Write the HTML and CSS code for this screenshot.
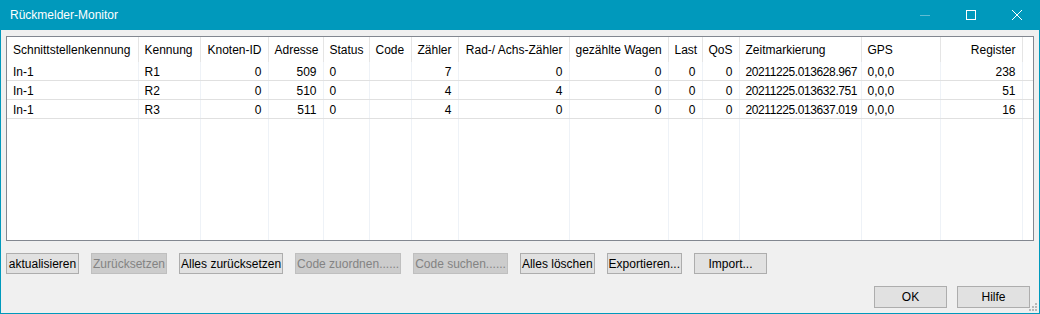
FILE: index.html
```html
<!DOCTYPE html>
<html lang="de">
<head>
    <meta charset="UTF-8">
    <title>Rückmelder-Monitor</title>
    <link rel="stylesheet" href="styles.css">
</head>
<body>

    <div class="window">
        <div class="titlebar">
            <span class="title">Rückmelder-Monitor</span>
            <div class="caption-buttons">
                <span class="cap-btn">
                    <svg width="10" height="10" viewBox="0 0 10 10"><line x1="0" y1="5.5" x2="10" y2="5.5" stroke="#5fbcd3" stroke-width="1"/></svg>
                </span>
                <span class="cap-btn">
                    <svg width="10" height="10" viewBox="0 0 10 10"><rect x="0.5" y="0.5" width="9" height="9" fill="none" stroke="#fff" stroke-width="1"/></svg>
                </span>
                <span class="cap-btn">
                    <svg width="10" height="10" viewBox="0 0 10 10"><path d="M0 0 L10 10 M10 0 L0 10" stroke="#fff" stroke-width="1"/></svg>
                </span>
            </div>
        </div>

        <div class="content">
            <div class="grid-box">
                <table class="grid">
                    <colgroup>
                        <col style="width:131px">
                        <col style="width:62px">
                        <col style="width:68px">
                        <col style="width:55px">
                        <col style="width:46px">
                        <col style="width:42px">
                        <col style="width:47px">
                        <col style="width:111px">
                        <col style="width:99px">
                        <col style="width:34px">
                        <col style="width:37px">
                        <col style="width:122px">
                        <col style="width:79px">
                        <col style="width:82px">
                        <col>
                    </colgroup>
                    <thead>
                        <tr>
                            <th>Schnittstellenkennung</th>
                            <th>Kennung</th>
                            <th class="num">Knoten-ID</th>
                            <th class="num">Adresse</th>
                            <th>Status</th>
                            <th>Code</th>
                            <th class="num">Zähler</th>
                            <th class="num">Rad-/ Achs-Zähler</th>
                            <th class="num">gezählte Wagen</th>
                            <th class="num">Last</th>
                            <th class="num">QoS</th>
                            <th>Zeitmarkierung</th>
                            <th>GPS</th>
                            <th class="num">Register</th>
                            <th></th>
                        </tr>
                    </thead>
                    <tbody>
                        <tr>
                            <td>In-1</td><td>R1</td><td class="num">0</td><td class="num">509</td><td>0</td><td></td>
                            <td class="num">7</td><td class="num">0</td><td class="num">0</td><td class="num">0</td><td class="num">0</td>
                            <td class="stamp">20211225.013628.967</td><td>0,0,0</td><td class="num">238</td><td></td>
                        </tr>
                        <tr>
                            <td>In-1</td><td>R2</td><td class="num">0</td><td class="num">510</td><td>0</td><td></td>
                            <td class="num">4</td><td class="num">4</td><td class="num">0</td><td class="num">0</td><td class="num">0</td>
                            <td class="stamp">20211225.013632.751</td><td>0,0,0</td><td class="num">51</td><td></td>
                        </tr>
                        <tr>
                            <td>In-1</td><td>R3</td><td class="num">0</td><td class="num">511</td><td>0</td><td></td>
                            <td class="num">4</td><td class="num">0</td><td class="num">0</td><td class="num">0</td><td class="num">0</td>
                            <td class="stamp">20211225.013637.019</td><td>0,0,0</td><td class="num">16</td><td></td>
                        </tr>
                        <tr class="filler">
                            <td></td><td></td><td></td><td></td><td></td><td></td><td></td><td></td>
                            <td></td><td></td><td></td><td></td><td></td><td></td><td></td>
                        </tr>
                    </tbody>
                </table>
            </div>

            <div class="toolbar">
                <button class="btn">aktualisieren</button>
                <button class="btn" disabled>Zurücksetzen</button>
                <button class="btn">Alles zurücksetzen</button>
                <button class="btn" disabled>Code zuordnen......</button>
                <button class="btn" disabled>Code suchen......</button>
                <button class="btn">Alles löschen</button>
                <button class="btn">Exportieren...</button>
                <button class="btn">Import...</button>
            </div>

            <div class="footer">
                <button class="btn wide">OK</button>
                <button class="btn wide">Hilfe</button>
            </div>
        </div>

        <div class="grip">
            <svg width="8" height="8" viewBox="0 0 8 8" fill="#b8b8b8">
                <rect x="6" y="0" width="2" height="2"/>
                <rect x="3" y="3" width="2" height="2"/><rect x="6" y="3" width="2" height="2"/>
                <rect x="0" y="6" width="2" height="2"/><rect x="3" y="6" width="2" height="2"/><rect x="6" y="6" width="2" height="2"/>
            </svg>
        </div>
    </div>

</body>
</html>
```

FILE: styles.css
```css
:root {
    --accent: #0099bc;
    --face: #f0f0f0;
    --grid-border: #828790;
    --head-line: #e5e5e5;
    --row-line: #e0e0e0;
    --col-line: #eef2f7;
}

body {
    margin: 0;
    font-family: "Liberation Sans", Arial, sans-serif;
    font-size: 12px;
    color: #000;
    background: var(--face);
}

.window {
    position: relative;
    width: 1040px;
    height: 314px;
    box-sizing: border-box;
    border: 1px solid var(--accent);
    border-top: none;
    background: var(--face);
    display: flex;
    flex-direction: column;
}

.titlebar {
    height: 30px;
    margin: 0 -1px;
    background: var(--accent);
    display: flex;
    align-items: center;
    justify-content: space-between;
    padding-left: 10px;
}

.title {
    color: #fff;
    font-size: 12px;
}

.caption-buttons {
    display: flex;
    height: 100%;
}

.cap-btn {
    width: 46px;
    display: flex;
    align-items: center;
    justify-content: center;
}

.content {
    flex: 1;
    padding: 6px 5px 0 5px;
    display: flex;
    flex-direction: column;
}

.grid-box {
    height: 205px;
    box-sizing: border-box;
    border: 1px solid var(--grid-border);
    background: #fff;
    overflow: hidden;
}

.grid {
    border-collapse: collapse;
    table-layout: fixed;
    width: 1026px;
}

.grid th {
    height: 25px;
    padding: 1px 6px 0 6px;
    box-sizing: border-box;
    font-weight: normal;
    text-align: left;
    white-space: nowrap;
    border-right: 1px solid var(--head-line);
}

.grid td {
    height: 16px;
    padding: 2px 6px 0 6px;
    line-height: 16px;
    white-space: nowrap;
    border-bottom: 1px solid var(--row-line);
    border-right: 1px solid var(--col-line);
}

.grid .num {
    text-align: right;
}

.grid .stamp {
    letter-spacing: -0.4px;
}

.grid .filler td {
    height: 119px;
    border-bottom: none;
}

.grid th:last-child,
.grid td:last-child {
    border-right: none;
}

.toolbar {
    display: flex;
    gap: 12px;
    margin-top: 12px;
}

.btn {
    height: 21px;
    min-width: 73px;
    padding: 0 1px;
    font-family: inherit;
    font-size: 12px;
    color: #000;
    background: #e1e1e1;
    border: 1px solid #adadad;
    border-radius: 0;
}

.btn:disabled {
    color: #838383;
    background: #cccccc;
    border-color: #bfbfbf;
}

.footer {
    display: flex;
    justify-content: flex-end;
    gap: 10px;
    margin-top: 12px;
    padding-right: 4px;
}

.btn.wide {
    width: 73px;
    height: 22px;
}

.grip {
    position: absolute;
    right: 2px;
    bottom: 2px;
    line-height: 0;
}
```
